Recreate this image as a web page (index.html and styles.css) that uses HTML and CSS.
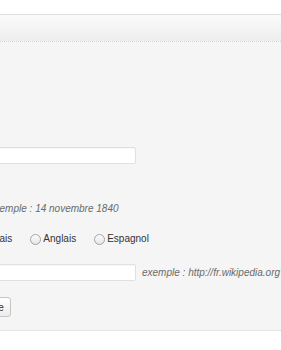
FILE: index.html
```html
<!DOCTYPE html>
<html lang="fr">
<head>
    <meta charset="UTF-8">
    <meta name="viewport" content="width=device-width, initial-scale=1.0">
    <title>Nouvelle fiche</title>
    <link rel="stylesheet" href="styles.css">
</head>
<body>
    <div class="box">
        <div class="box-header"></div>
        <form class="box-body">
            <div class="fields">
                <input class="field" type="text" name="titre">
                <p class="hint hint-date">exemple : 14 novembre 1840</p>
                <div class="radios">
                    <label><input type="radio" name="langue">Français</label>
                    <label><input type="radio" name="langue">Anglais</label>
                    <label><input type="radio" name="langue">Espagnol</label>
                </div>
                <div class="url-row">
                    <input class="field" type="text" name="url">
                    <span class="hint">exemple : http://fr.wikipedia.org</span>
                </div>
                <button class="btn" type="button">Sauvegarde</button>
            </div>
        </form>
    </div>
</body>
</html>
```

FILE: styles.css
```css
body {
    font-family: "Liberation Sans", Arial, sans-serif;
    font-size: 10px;
    line-height: 12px;
    color: #333;
    margin: 0;
    padding: 0;
    background-color: #fff;
    overflow: hidden;
}
.box {
    margin-top: 14px;
    border-top: 1px solid #e0e0e0;
}
.box-header {
    height: 26px;
    background: linear-gradient(#fbfbfb, #eeeeee);
    border-bottom: 1px dotted #d6d6d6;
}
.box-body {
    margin: 0;
    padding: 105px 0 13px;
    background-color: #f5f5f5;
    border-bottom: 1px solid #e4e4e4;
}
.fields {
    margin-left: -61px;
    display: flex;
    flex-direction: column;
    align-items: flex-start;
}
.field {
    box-sizing: border-box;
    width: 197px;
    height: 17px;
    margin: 0;
    border: 1px solid #e0e0e0;
    border-radius: 2px;
    background-color: #fff;
    box-shadow: inset 0 1px 1px rgba(0, 0, 0, 0.03);
}
.hint {
    font-style: italic;
    color: #6a6a6a;
}
.hint-date {
    margin: 39px 0 0 50px;
}
.radios {
    display: flex;
    gap: 18px;
    height: 12px;
    margin: 18px 0 0 22px;
}
.radios label {
    display: flex;
    align-items: center;
    gap: 2px;
}
.radios input {
    appearance: none;
    -webkit-appearance: none;
    box-sizing: border-box;
    width: 11px;
    height: 11px;
    margin: 0;
    border: 1px solid #a4a4a4;
    border-radius: 50%;
    background: linear-gradient(#fdfdfd, #e6e6e6);
}
.url-row {
    display: flex;
    align-items: center;
    gap: 6px;
    margin-top: 19px;
}
.url-row .hint {
    white-space: nowrap;
}
.btn {
    margin: 16px 0 0 3px;
    height: 20px;
    padding: 0 6px 0 7px;
    font-family: inherit;
    font-size: 10px;
    color: #333;
    border: 1px solid #c4c4c4;
    border-radius: 3px;
    background: linear-gradient(#fff, #ececec);
}
```
